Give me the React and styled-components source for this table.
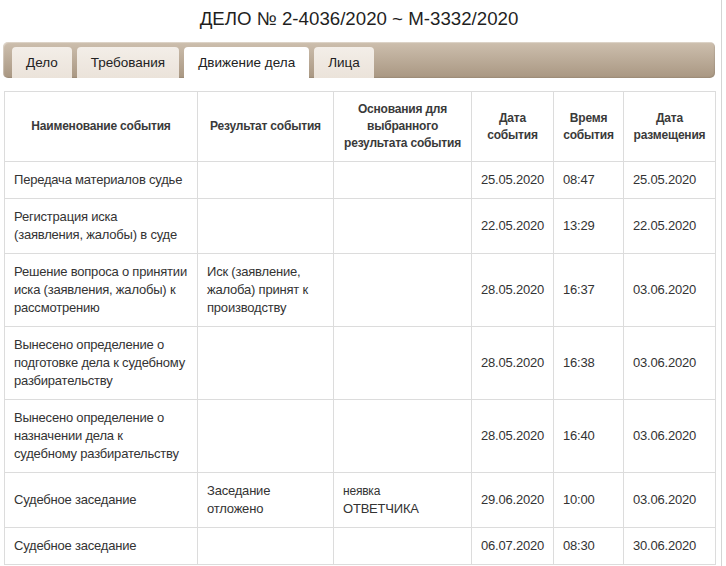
import React from "react";
import styled, { createGlobalStyle } from "styled-components";

const GlobalStyle = createGlobalStyle`
  html, body { margin: 0; padding: 0; background: #fff; }
  body { font-family: "Liberation Sans", Arial, sans-serif; color: #333; }
`;

const Page = styled.div`
  box-sizing: border-box;
  width: 722px;
  min-height: 566px;
  padding: 0 6px 0 3px;
  border-right: 1px solid #d4d4d4;
`;

const Title = styled.h1`
  margin: 0;
  padding-top: 8px;
  height: 34px;
  box-sizing: content-box;
  font-size: 18.7px;
  font-weight: normal;
  line-height: 21px;
  color: #1f1f1f;
  text-align: center;
`;

const TabBar = styled.div`
  display: flex;
  align-items: flex-end;
  gap: 5px;
  height: 36px;
  box-sizing: border-box;
  padding-left: 9px;
  border-radius: 5px;
  background: linear-gradient(#cdbfae, #a99782);
  box-shadow: inset 1px 1px 1px rgba(255, 255, 255, 0.35), inset -1px -1px 1px rgba(0, 0, 0, 0.08);
`;

const Tab = styled.div`
  height: 31px;
  padding: 0 14px;
  border-radius: 4px 4px 0 0;
  background: ${(p) => (p.$active ? "#ffffff" : "linear-gradient(#f3eee8, #ebe3da)")};
  font-size: 13.5px;
  line-height: 31px;
  color: #222;
  white-space: nowrap;
`;

const Table = styled.table`
  margin: 13px 0 0 1px;
  width: 711px;
  table-layout: fixed;
  border-collapse: collapse;
  border: 1px solid #dcdcdc;
`;

const Th = styled.th`
  padding: 9px 4px;
  border: 1px solid #dcdcdc;
  font-size: 12px;
  font-weight: bold;
  letter-spacing: -0.2px;
  line-height: 17px;
  color: #3a3a3a;
  text-align: center;
  vertical-align: middle;
`;

const Td = styled.td`
  padding: 9px 8px 9px 9px;
  border: 1px solid #dcdcdc;
  font-size: 13px;
  letter-spacing: -0.2px;
  line-height: 18px;
  color: #333;
  text-align: left;
  vertical-align: middle;
`;

const Small = styled.span`
  font-size: 12px;
`;

const rows = [
  ["Передача материалов судье", "", "", "25.05.2020", "08:47", "25.05.2020"],
  ["Регистрация иска (заявления, жалобы) в суде", "", "", "22.05.2020", "13:29", "22.05.2020"],
  ["Решение вопроса о принятии иска (заявления, жалобы) к рассмотрению", "Иск (заявление, жалоба) принят к производству", "", "28.05.2020", "16:37", "03.06.2020"],
  ["Вынесено определение о подготовке дела к судебному разбирательству", "", "", "28.05.2020", "16:38", "03.06.2020"],
  ["Вынесено определение о назначении дела к судебному разбирательству", "", "", "28.05.2020", "16:40", "03.06.2020"],
  ["Судебное заседание", "Заседание отложено", "reason", "29.06.2020", "10:00", "03.06.2020"],
  ["Судебное заседание", "", "", "06.07.2020", "08:30", "30.06.2020"],
];

const widths = [193, 136, 138, 82, 70, 92];

export default function App() {
  return (
    <>
      <GlobalStyle />
      <Page>
        <Title>ДЕЛО № 2-4036/2020 ~ М-3332/2020</Title>
        <TabBar>
          <Tab>Дело</Tab>
          <Tab>Требования</Tab>
          <Tab $active>Движение дела</Tab>
          <Tab>Лица</Tab>
        </TabBar>
        <Table>
          <colgroup>
            {widths.map((w, i) => (
              <col key={i} style={{ width: w }} />
            ))}
          </colgroup>
          <thead>
            <tr>
              <Th>Наименование события</Th>
              <Th>Результат события</Th>
              <Th>Основания для выбранного результата события</Th>
              <Th>Дата события</Th>
              <Th>Время события</Th>
              <Th>Дата размещения</Th>
            </tr>
          </thead>
          <tbody>
            {rows.map((r, i) => (
              <tr key={i}>
                {r.map((c, j) => (
                  <Td key={j}>
                    {c === "reason" ? (
                      <>
                        <Small>неявка</Small>
                        <br />
                        ОТВЕТЧИКА
                      </>
                    ) : (
                      c
                    )}
                  </Td>
                ))}
              </tr>
            ))}
          </tbody>
        </Table>
      </Page>
    </>
  );
}
